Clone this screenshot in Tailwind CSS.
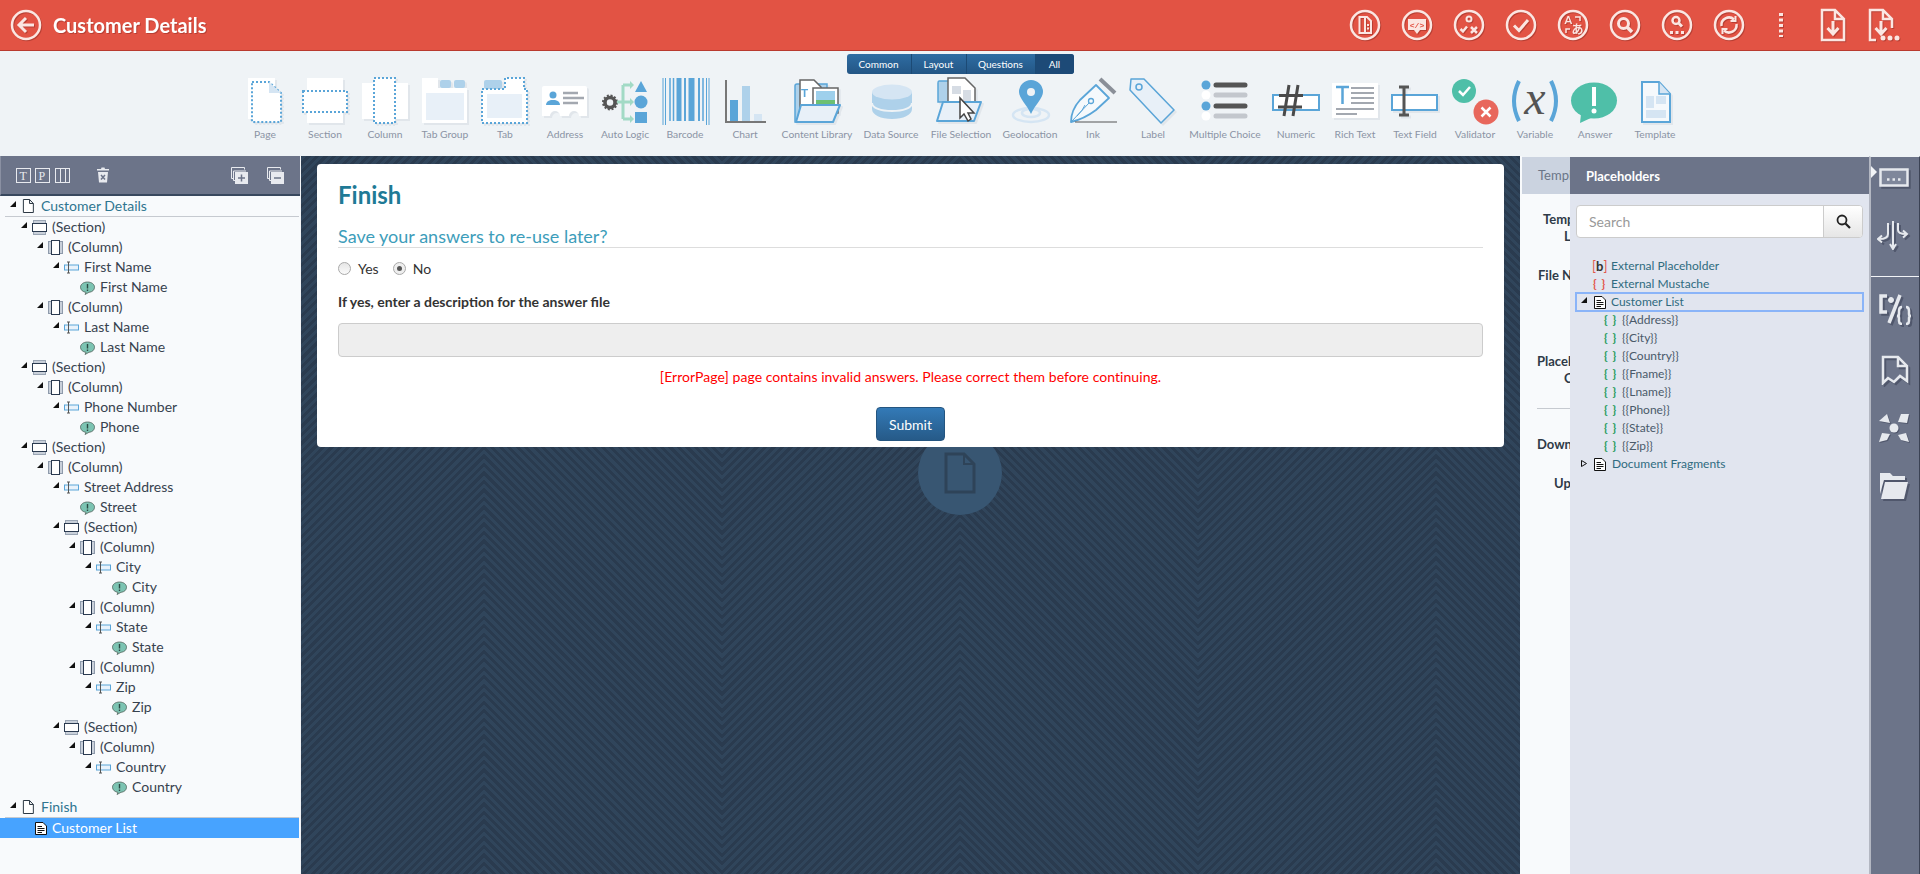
<!DOCTYPE html>
<html>
<head>
<meta charset="UTF-8">
<title>Customer Details</title>
<script src="https://cdn.jsdelivr.net/npm/@tailwindcss/browser@4"></script>
</head>
<body class="[font-family:Lato,'Noto_Sans',sans-serif] h-screen overflow-hidden flex flex-col bg-[#eff3f6]">

<!-- shared tree icons -->
<svg class="hidden">
  <symbol id="arrow" viewBox="0 0 6 6"><polygon points="0,6 6,6 6,0" fill="#111"/></symbol>
  <symbol id="page" viewBox="0 0 15 14"><path d="M2.500 .5H9L13 4.500V13.500H2.500Z M9 .5V4.500H13" fill="#fff" stroke="#26323f" transform="scale(.95 1)"/></symbol>
  <symbol id="section" viewBox="0 0 15 15"><rect x="1.500" y="0.500" width="12" height="14" fill="#c9d0da" stroke="#9aa5b4"/><rect x=".5" y="3.500" width="14" height="8" fill="#fff" stroke="#2a3a50"/></symbol>
  <symbol id="column" viewBox="0 0 15 15"><rect x=".5" y="1.500" width="14" height="12" fill="#c9d0da" stroke="#8e9aab"/><rect x="3.500" y=".5" width="8" height="14" fill="#fff" stroke="#2a3a50"/></symbol>
  <symbol id="field" viewBox="0 0 15 15"><rect x=".5" y="5" width="14" height="5" fill="#e8f2fb" stroke="#5aa5d8"/><path d="M4.500 2V13M3 2H6M3 13H6" stroke="#555" fill="none"/></symbol>
  <symbol id="answer" viewBox="0 0 15 15"><path d="M7.500 2C3.500 2 .5 4.200 .5 7.200C.5 10 3 12 6 12.300L5 14.500L9 12.300C12.300 12 14.500 10 14.500 7.200C14.500 4.200 11.500 2 7.500 2Z" fill="#7cc3b2" stroke="#55675f" stroke-width=".8"/><path d="M7.500 4V8.500M7.500 9.500V11" stroke="#2c4a44" stroke-width="1.400"/></symbol>
  <symbol id="listdoc" viewBox="0 0 12 13"><path d="M.5 .5H8L11.500 4V12.500H.5Z" fill="#fff" stroke="#111"/><path d="M2.500 4.500H7M2.500 6.500H9.500M2.500 8.500H9.500M2.500 10.500H7" stroke="#111"/></symbol>
</svg>

<!-- top bar -->
<header class="h-[51px] shrink-0 bg-[#e25344] border-b border-[#b93a2f] flex items-center text-[#fbe6e2]">
  <svg class="ml-[10px] drop-shadow-[1px_1px_0_#b83f33]" width="32" height="32" viewBox="0 0 32 32" fill="none" stroke="currentColor"><circle cx="16" cy="16" r="14" stroke-width="2.500"/><path d="M24 16H10M16 9L9 16L16 23" stroke-width="3"/></svg>
  <h1 class="ml-[11px] text-[20px] font-bold text-white drop-shadow-[1px_1px_0_#b83f33]">Customer Details</h1>
  <div class="ml-auto pr-[9px] flex items-center drop-shadow-[1px_1px_0_#b83f33]">
    <div class="w-[52px] flex justify-center"><svg width="32" height="32" viewBox="0 0 32 32" fill="none" stroke="currentColor"><circle cx="16" cy="16" r="14" stroke-width="2.500"/><path d="M10.500 8H18L22 12V24H10.500ZM16 8V24" stroke-width="2"/><path d="M19 15V22" stroke-width="2" stroke-dasharray="2 1.500"/></svg></div>
    <div class="w-[52px] flex justify-center"><svg width="32" height="32" viewBox="0 0 32 32"><circle cx="16" cy="16" r="14" fill="none" stroke="currentColor" stroke-width="2.500"/><path d="M7 10H25V21H19L16 25L13 21H7Z" fill="currentColor"/><text x="16" y="18.500" text-anchor="middle" font-size="8" font-weight="700" fill="#e25344" font-family="Liberation Mono">&lt;/&gt;</text></svg></div>
    <div class="w-[52px] flex justify-center"><svg width="32" height="32" viewBox="0 0 32 32" fill="none" stroke="currentColor"><circle cx="16" cy="16" r="14" stroke-width="2.500"/><circle cx="16" cy="10" r="2.500" stroke-width="2"/><path d="M7.500 20L10 22.500L14 17.500" stroke-width="2.500"/><path d="M18 18L24 24M24 18L18 24" stroke-width="2.500"/></svg></div>
    <div class="w-[52px] flex justify-center"><svg width="32" height="32" viewBox="0 0 32 32" fill="none" stroke="currentColor"><circle cx="16" cy="16" r="14" stroke-width="2.500"/><path d="M9 16.500L14 21.500L23 11" stroke-width="3"/></svg></div>
    <div class="w-[52px] flex justify-center"><svg width="32" height="32" viewBox="0 0 32 32" fill="none" stroke="currentColor"><circle cx="16" cy="16" r="14" stroke-width="2.500"/><text x="7.500" y="15" font-size="11" font-weight="700" fill="currentColor" stroke="none">A</text><text x="14.500" y="25" font-size="12" font-weight="700" fill="currentColor" stroke="none" font-family="Noto Sans CJK JP">あ</text><path d="M18 8H23V12M13 20H9V24" stroke-width="1.500"/></svg></div>
    <div class="w-[52px] flex justify-center"><svg width="32" height="32" viewBox="0 0 32 32" fill="none" stroke="currentColor"><circle cx="16" cy="16" r="14" stroke-width="2.500"/><circle cx="14.500" cy="14.500" r="5" stroke-width="3"/><path d="M18.500 18.500L23 23" stroke-width="3.500"/></svg></div>
    <div class="w-[52px] flex justify-center"><svg width="32" height="32" viewBox="0 0 32 32" fill="none" stroke="currentColor"><circle cx="16" cy="16" r="14" stroke-width="2.500"/><circle cx="15" cy="11.500" r="3.500" stroke-width="2.500"/><path d="M18 14.500L21 17.500" stroke-width="3"/><path d="M9 23.500H23" stroke-width="3" stroke-dasharray="3 2.500"/></svg></div>
    <div class="w-[52px] flex justify-center"><svg width="32" height="32" viewBox="0 0 32 32" fill="none" stroke="currentColor"><circle cx="16" cy="16" r="14" stroke-width="2.500"/><path d="M8.500 17A7.500 7.500 0 0 1 21 10.500M23.500 15A7.500 7.500 0 0 1 11 21.500" stroke-width="2.500"/><path d="M22.500 7V12H17.500M9.500 25V20H14.500" stroke-width="2"/></svg></div>
    <div class="w-[52px] flex justify-center"><svg width="6" height="32" viewBox="0 0 6 32"><path d="M3 4V28" stroke="currentColor" stroke-width="4" stroke-dasharray="3 2.500"/></svg></div>
    <div class="w-[52px] flex justify-center"><svg width="26" height="34" viewBox="0 0 26 34"><path d="M2 2H15L24 11V32H2Z M15 2V11H24" fill="none" stroke="currentColor" stroke-width="2.500"/><path d="M13 13V24M7.500 20L13 26L18.500 20" fill="none" stroke="currentColor" stroke-width="3"/></svg></div>
    <div class="w-[52px] flex justify-center"><svg width="34" height="34" viewBox="0 0 34 34"><path d="M8 32H2V2H15L24 11V20 M15 2V11H24" fill="none" stroke="currentColor" stroke-width="2.500"/><path d="M13 13V24M7.500 20L13 26L18.500 20" fill="none" stroke="currentColor" stroke-width="3"/><circle cx="15" cy="30" r="2.500" fill="currentColor"/><circle cx="22" cy="30" r="2.500" fill="currentColor"/><circle cx="29" cy="30" r="2.500" fill="currentColor"/></svg></div>
  </div>
</header>

<!-- element palette -->
<section class="h-[105px] shrink-0 bg-[#eff3f6] flex flex-col items-center">
  <div class="mt-[3px] h-[20px] flex rounded-[3px] overflow-hidden text-[10px] leading-[20px] text-white bg-gradient-to-b from-[#2f6da3] to-[#235685] relative z-10">
    <div class="w-[65px] text-center border-r border-[#1c4a75]">Common</div>
    <div class="w-[55px] text-center border-r border-[#1c4a75]">Layout</div>
    <div class="w-[69px] text-center border-r border-[#1c4a75]">Questions</div>
    <div class="w-[38px] text-center bg-[#1d4a77]">All</div>
  </div>
  <div class="-mt-[2px] flex text-[10.300px] leading-[12px] text-[#8b93a5] whitespace-nowrap">
    <div class="w-[60px] flex flex-col items-center">
      <svg class="drop-shadow-[2px_2px_0_#e1e6eb]" width="60" height="56" viewBox="0 0 60 56"><rect x="13" y="6" width="27" height="41" fill="#fff"/><path d="M17 10H34L46 21V50H17Z" fill="#fff" stroke="#5aa5d8" stroke-width="2" stroke-dasharray="2 2"/><path d="M34 10L46 21H34Z" fill="#d5e5f3"/></svg>
      <span>Page</span>
    </div>
    <div class="w-[60px] flex flex-col items-center">
      <svg class="drop-shadow-[2px_2px_0_#e1e6eb]" width="60" height="56" viewBox="0 0 60 56"><rect x="12" y="6" width="36" height="45" fill="#fff"/><rect x="8" y="19" width="44" height="21" fill="#fff" stroke="#5aa5d8" stroke-width="2" stroke-dasharray="2 2"/></svg>
      <span>Section</span>
    </div>
    <div class="w-[60px] flex flex-col items-center">
      <svg class="drop-shadow-[2px_2px_0_#e1e6eb]" width="60" height="56" viewBox="0 0 60 56"><rect x="7" y="11" width="46" height="36" fill="#fff"/><rect x="19" y="6" width="21" height="45" fill="#fff" stroke="#5aa5d8" stroke-width="2" stroke-dasharray="2 2"/></svg>
      <span>Column</span>
    </div>
    <div class="w-[60px] flex flex-col items-center">
      <svg class="drop-shadow-[2px_2px_0_#e1e6eb]" width="60" height="56" viewBox="0 0 60 56"><path d="M7 6H23V16H52V51H7Z" fill="#fff"/><rect x="25" y="8" width="11" height="8" rx="2" fill="#aed1ea"/><rect x="39" y="8" width="11" height="8" rx="2" fill="#aed1ea"/><rect x="11" y="21" width="38" height="27" fill="#e8f0f8"/></svg>
      <span>Tab Group</span>
    </div>
    <div class="w-[60px] flex flex-col items-center">
      <svg class="drop-shadow-[2px_2px_0_#e1e6eb]" width="60" height="56" viewBox="0 0 60 56"><rect x="9" y="8" width="18" height="9" rx="2" fill="#aed1ea"/><path d="M7 17H30V6H49V17H52V51H7Z" fill="#fff" stroke="#5aa5d8" stroke-width="2" stroke-dasharray="2 2"/><rect x="12" y="22" width="35" height="24" fill="#e8f0f8"/></svg>
      <span>Tab</span>
    </div>
    <div class="w-[60px] flex flex-col items-center">
      <svg class="drop-shadow-[2px_2px_0_#e1e6eb]" width="60" height="56" viewBox="0 0 60 56"><path d="M9 14H50Q52 14 52 16V44H44A5 5 0 0 0 34 44H25A5 5 0 0 0 15 44H7V16Q7 14 9 14Z" fill="#fff"/><circle cx="18" cy="23" r="3.500" fill="#5aa5d8"/><path d="M11 33Q11 29 16 28H20Q25 29 25 33Z" fill="#5aa5d8"/><path d="M28 21H43M28 26H49M28 31H43" stroke="#a3a8b0" stroke-width="2.500"/></svg>
      <span>Address</span>
    </div>
    <div class="w-[60px] flex flex-col items-center">
      <svg width="60" height="56" viewBox="0 0 60 56"><circle cx="15" cy="30.500" r="5" fill="none" stroke="#555" stroke-width="3.500"/><circle cx="15" cy="30.500" r="7" fill="none" stroke="#555" stroke-width="2" stroke-dasharray="2 1.700"/><path d="M28 13V47M28 13H36M28 30H36M22 30H28M28 47H36" fill="none" stroke="#a2dac5" stroke-width="3"/><path d="M35 9L39 13L35 17ZM35 26L39 30L35 34ZM35 43L39 47L35 51Z" fill="#a2dac5"/><polygon points="46,9 52,20 40,20" fill="#5aa5d8"/><circle cx="46" cy="30" r="6.500" fill="#5aa5d8"/><rect x="40" y="40" width="12" height="11" fill="#5aa5d8"/></svg>
      <span>Auto Logic</span>
    </div>
    <div class="w-[60px] flex flex-col items-center">
      <svg width="60" height="56" viewBox="0 0 60 56"><g stroke="#5aa5d8"><path d="M8 6V53M10.500 6V53M54 6V53M51.500 6V53" stroke-width="1"/><path d="M15 6V49M18.500 6V49" stroke-width="1.500"/><path d="M24 6V49" stroke-width="5"/><path d="M30 6V49M44 6V49" stroke-width="2"/><path d="M36.500 6V49" stroke-width="6"/><path d="M48 6V49" stroke-width="1.500"/></g></svg>
      <span>Barcode</span>
    </div>
    <div class="w-[60px] flex flex-col items-center">
      <svg width="60" height="56" viewBox="0 0 60 56"><path d="M11 8V50H51" fill="none" stroke="#777" stroke-width="2"/><rect x="15" y="28" width="8" height="21" fill="#5aa5d8"/><rect x="27" y="14" width="8" height="35" fill="#aed1ea"/><rect x="39" y="42" width="8" height="7" fill="#d5e5f3"/></svg>
      <span>Chart</span>
    </div>
    <div class="w-[80px] ml-[2px] flex flex-col items-center">
      <svg class="drop-shadow-[2px_2px_0_#e1e6eb]" width="80" height="56" viewBox="0 0 80 56"><path d="M20 12Q18 12 18 14V50H50V12Z" fill="#aed1ea" stroke="#5aa5d8" stroke-width="1.500"/><path d="M23 8H37L44 15V36H23Z" fill="#fff" stroke="#666" stroke-width="1.500"/><text x="24" y="25" font-size="12" font-weight="700" fill="#5aa5d8">T</text><rect x="36" y="16" width="25" height="25" fill="#fff" stroke="#666" stroke-width="1.500"/><rect x="39" y="19" width="19" height="9" fill="#9ed0ec"/><rect x="39" y="28" width="19" height="9" fill="#6cc073"/><path d="M24 33H63L56 50H19Z" fill="#e8f0f8" stroke="#5aa5d8" stroke-width="2" stroke-linejoin="round"/></svg>
      <span>Content Library</span>
    </div>
    <div class="w-[68px] flex flex-col items-center">
      <svg width="68" height="56" viewBox="0 0 68 56"><path d="M15 37V20H55V37C55 43 46 47 35 47C24 47 15 43 15 37Z" fill="#aed1ea"/><path d="M15 31C15 36 24 39 35 39C46 39 55 36 55 31" fill="none" stroke="#eff3f6" stroke-width="2"/><ellipse cx="35" cy="20" rx="20" ry="7.500" fill="#d5e5f3"/></svg>
      <span>Data Source</span>
    </div>
    <div class="w-[72px] flex flex-col items-center">
      <svg class="drop-shadow-[2px_2px_0_#e1e6eb]" width="72" height="56" viewBox="0 0 72 56"><path d="M14 9H30V30H13V11Q13 9 14 9Z" fill="#aed1ea" stroke="#5aa5d8" stroke-width="1.500"/><path d="M23 6H40L50 16V33H23Z" fill="#fff" stroke="#666" stroke-width="1.500"/><path d="M27 14H36V22H27ZM38 18H46V30H38Z" fill="#d6dce4"/><path d="M18 30H56L49 49H12Z" fill="#e8f0f8" stroke="#5aa5d8" stroke-width="2" stroke-linejoin="round"/><path d="M35 26V46L39 42L43 49L46 47L43 41H49Z" fill="#fff" stroke="#444" stroke-width="1.500"/></svg>
      <span>File Selection</span>
    </div>
    <div class="w-[66px] flex flex-col items-center">
      <svg width="66" height="56" viewBox="0 0 66 56"><ellipse cx="34" cy="43" rx="18" ry="7" fill="none" stroke="#d5e5f3" stroke-width="2.500"/><ellipse cx="34" cy="41" rx="9" ry="4" fill="none" stroke="#d5e5f3" stroke-width="2.500"/><path d="M34 42C30 33 22 26 22 20A12 12 0 0 1 46 20C46 26 38 33 34 42Z" fill="#5aa5d8"/><circle cx="34" cy="20" r="4" fill="#eff3f6"/></svg>
      <span>Geolocation</span>
    </div>
    <div class="w-[60px] flex flex-col items-center">
      <svg width="60" height="56" viewBox="0 0 60 56"><path d="M8 50Q8 38 17 28L33 13L46 26L33 38Q21 47 8 50Z" fill="#f5f9fc" stroke="#5aa5d8" stroke-width="1.800" stroke-linejoin="round"/><path d="M22 33Q20 38 14 44" fill="none" stroke="#5aa5d8"/><path d="M9 49L26 31" stroke="#5aa5d8"/><circle cx="28" cy="29" r="2.500" fill="none" stroke="#5aa5d8" stroke-width="1.300"/><path d="M37 7L52 21" stroke="#8a8f98" stroke-width="4"/><path d="M12 50H54" stroke="#555" stroke-width="1.200"/></svg>
      <span>Ink</span>
    </div>
    <div class="w-[60px] flex flex-col items-center">
      <svg class="drop-shadow-[2px_2px_0_#e1e6eb]" width="60" height="56" viewBox="0 0 60 56"><path d="M8 7H21L51 38L38 51L7 18Z" fill="#e8f0f8" stroke="#5aa5d8" stroke-width="1.500" stroke-linejoin="round"/><circle cx="16" cy="15" r="3" fill="none" stroke="#5aa5d8" stroke-width="1.500"/></svg>
      <span>Label</span>
    </div>
    <div class="w-[84px] flex flex-col items-center">
      <svg width="84" height="56" viewBox="0 0 84 56"><circle cx="23" cy="13" r="4.500" fill="#5aa5d8"/><circle cx="23" cy="23" r="4.500" fill="#fff"/><circle cx="23" cy="34" r="4.500" fill="#5aa5d8"/><circle cx="23" cy="44" r="4.500" fill="#fff"/><path d="M33 13H62M33 34H62" stroke="#555" stroke-width="5" stroke-linecap="round"/><path d="M33 23H62M33 44H62" stroke="#c3c7cd" stroke-width="5" stroke-linecap="round"/></svg>
      <span>Multiple Choice</span>
    </div>
    <div class="w-[58px] flex flex-col items-center">
      <svg width="58" height="56" viewBox="0 0 58 56"><rect x="6" y="23" width="46" height="15" fill="#fff" stroke="#5aa5d8" stroke-width="2"/><path d="M22 13L17 44M31 13L26 44M12 23.500H36M11 35H35" fill="none" stroke="#4a4a4a" stroke-width="3"/></svg>
      <span>Numeric</span>
    </div>
    <div class="w-[60px] flex flex-col items-center">
      <svg class="drop-shadow-[2px_2px_0_#e1e6eb]" width="60" height="56" viewBox="0 0 60 56"><rect x="7" y="11" width="46" height="35" fill="#fff"/><path d="M11 15H24M17.500 15V32" stroke="#5aa5d8" stroke-width="2.500"/><path d="M26 16H49M26 21H49M26 26H49M26 31H49M11 37H49M11 42H32" stroke="#a3a8b0" stroke-width="2"/></svg>
      <span>Rich Text</span>
    </div>
    <div class="w-[60px] flex flex-col items-center">
      <svg class="drop-shadow-[2px_2px_0_#e1e6eb]" width="60" height="56" viewBox="0 0 60 56"><rect x="7" y="23" width="45" height="15" fill="#fff" stroke="#5aa5d8" stroke-width="2"/><path d="M19 15V43M14 15H24M14 43H24" fill="none" stroke="#555" stroke-width="3"/></svg>
      <span>Text Field</span>
    </div>
    <div class="w-[60px] flex flex-col items-center">
      <svg width="60" height="56" viewBox="0 0 60 56"><circle cx="19" cy="19" r="12" fill="#4fbfa8"/><path d="M14 19L18 23L25 15" fill="none" stroke="#fff" stroke-width="2.500"/><circle cx="41" cy="40" r="12.500" fill="#e8675c"/><path d="M36.500 35.500L45.500 44.500M45.500 35.500L36.500 44.500" stroke="#fff" stroke-width="2.500"/></svg>
      <span>Validator</span>
    </div>
    <div class="w-[60px] flex flex-col items-center">
      <svg width="60" height="56" viewBox="0 0 60 56"><path d="M14 9Q4 29 14 49M46 9Q56 29 46 49" fill="none" stroke="#5aa5d8" stroke-width="4"/><text x="30" y="42" text-anchor="middle" font-size="48" font-style="italic" fill="#555" font-family="Liberation Serif">x</text></svg>
      <span>Variable</span>
    </div>
    <div class="w-[60px] flex flex-col items-center">
      <svg width="60" height="56" viewBox="0 0 60 56"><ellipse cx="29" cy="28.500" rx="23" ry="18" fill="#4fbfa8"/><path d="M16 42L15 51L28 45Z" fill="#4fbfa8"/><path d="M29 15L29 34" stroke="#fff" stroke-width="4"/><circle cx="29" cy="39" r="2.500" fill="#fff"/></svg>
      <span>Answer</span>
    </div>
    <div class="w-[60px] flex flex-col items-center">
      <svg class="drop-shadow-[2px_2px_0_#e1e6eb]" width="60" height="56" viewBox="0 0 60 56"><path d="M17 10H34L45 22V50H17Z" fill="#f5f9fc" stroke="#5aa5d8" stroke-width="2"/><path d="M34 10V22H45" fill="#d5e5f3" stroke="#5aa5d8" stroke-width="1.500"/><rect x="21" y="24" width="8" height="12" fill="#d5e5f3"/><rect x="31" y="24" width="10" height="8" fill="#d5e5f3"/><rect x="21" y="38" width="20" height="8" fill="#d5e5f3"/></svg>
      <span>Template</span>
    </div>
  </div>
</section>

<main class="flex-1 flex min-h-0">
  <!-- outline tree -->
  <aside class="w-[300px] shrink-0 bg-[#f8fafc] border-r border-[#f1f3f6] box-content text-[14px] leading-[20px] text-[#37424f] flex flex-col">
    <div class="h-[40px] shrink-0 bg-[#6c7489] border-b-2 border-[#38485e] border-l border-l-[#8a90a2] flex items-center text-[#e8eaef] relative">
      <svg class="ml-[15px]" width="56" height="17" viewBox="0 0 56 17" fill="none" stroke="currentColor"><rect x=".5" y="1.500" width="14" height="14"/><text x="3.500" y="13" font-size="12" font-family="Liberation Serif" fill="currentColor" stroke="none">T</text><rect x="19.500" y="1.500" width="14" height="14"/><text x="22.500" y="13" font-size="12" font-family="Liberation Serif" fill="currentColor" stroke="none">P</text><rect x="39.500" y="1.500" width="14" height="14"/><path d="M44.500 1.500V15.500M49.500 1.500V15.500"/></svg>
      <svg class="ml-[24px]" width="14" height="16" viewBox="0 0 14 16" fill="currentColor"><path d="M1 2H5L5.500 .5H8.500L9 2H13V3.500H1ZM2 5H12L11 15.500H3Z"/><path d="M5 8L9 12.500M9 8L5 12.500" stroke="#6c7489" stroke-width="1.500"/></svg>
      <svg class="ml-auto" width="17" height="17" viewBox="0 0 17 17" fill="none" stroke="currentColor"><path d="M13.500 2.500V.5H.5V11.500H2.500"/><path d="M15 4H2.500V13.500H4.500"/><rect x="4.500" y="5.500" width="12" height="11" fill="currentColor"/><path d="M10.500 7.500V14.500M7 11H14" stroke="#6c7489" stroke-width="1.500"/></svg>
      <svg class="ml-[19px] mr-[16px]" width="17" height="17" viewBox="0 0 17 17" fill="none" stroke="currentColor"><path d="M13.500 2.500V.5H.5V11.500H2.500"/><path d="M15 4H2.500V13.500H4.500"/><rect x="4.500" y="5.500" width="12" height="11" fill="currentColor"/><path d="M7 11H14" stroke="#6c7489" stroke-width="1.500"/></svg>
    </div>
    <div class="ml-[5px] w-[294px] h-[21px] border-b border-[#c6cad0] flex items-center pl-[5px] text-[#2f7590]"><svg class="w-[6px] h-[6px] -mt-[5px]" width="6" height="6"><use href="#arrow"/></svg><svg class="ml-[5px]" width="15" height="14"><use href="#page"/></svg><span class="ml-[5px]">Customer Details</span></div>

    <div class="h-[20px] flex items-center pl-[21px]"><svg class="-mt-[5px]" width="6" height="6"><use href="#arrow"/></svg><svg class="ml-[5px]" width="15" height="15"><use href="#section"/></svg><span class="ml-[5px]">(Section)</span></div>
    <div class="h-[20px] flex items-center pl-[37px]"><svg class="-mt-[5px]" width="6" height="6"><use href="#arrow"/></svg><svg class="ml-[5px]" width="15" height="15"><use href="#column"/></svg><span class="ml-[5px]">(Column)</span></div>
    <div class="h-[20px] flex items-center pl-[53px]"><svg class="-mt-[5px]" width="6" height="6"><use href="#arrow"/></svg><svg class="ml-[5px]" width="15" height="15"><use href="#field"/></svg><span class="ml-[5px]">First Name</span></div>
    <div class="h-[20px] flex items-center pl-[80px]"><svg width="15" height="15"><use href="#answer"/></svg><span class="ml-[5px]">First Name</span></div>
    <div class="h-[20px] flex items-center pl-[37px]"><svg class="-mt-[5px]" width="6" height="6"><use href="#arrow"/></svg><svg class="ml-[5px]" width="15" height="15"><use href="#column"/></svg><span class="ml-[5px]">(Column)</span></div>
    <div class="h-[20px] flex items-center pl-[53px]"><svg class="-mt-[5px]" width="6" height="6"><use href="#arrow"/></svg><svg class="ml-[5px]" width="15" height="15"><use href="#field"/></svg><span class="ml-[5px]">Last Name</span></div>
    <div class="h-[20px] flex items-center pl-[80px]"><svg width="15" height="15"><use href="#answer"/></svg><span class="ml-[5px]">Last Name</span></div>

    <div class="h-[20px] flex items-center pl-[21px]"><svg class="-mt-[5px]" width="6" height="6"><use href="#arrow"/></svg><svg class="ml-[5px]" width="15" height="15"><use href="#section"/></svg><span class="ml-[5px]">(Section)</span></div>
    <div class="h-[20px] flex items-center pl-[37px]"><svg class="-mt-[5px]" width="6" height="6"><use href="#arrow"/></svg><svg class="ml-[5px]" width="15" height="15"><use href="#column"/></svg><span class="ml-[5px]">(Column)</span></div>
    <div class="h-[20px] flex items-center pl-[53px]"><svg class="-mt-[5px]" width="6" height="6"><use href="#arrow"/></svg><svg class="ml-[5px]" width="15" height="15"><use href="#field"/></svg><span class="ml-[5px]">Phone Number</span></div>
    <div class="h-[20px] flex items-center pl-[80px]"><svg width="15" height="15"><use href="#answer"/></svg><span class="ml-[5px]">Phone</span></div>

    <div class="h-[20px] flex items-center pl-[21px]"><svg class="-mt-[5px]" width="6" height="6"><use href="#arrow"/></svg><svg class="ml-[5px]" width="15" height="15"><use href="#section"/></svg><span class="ml-[5px]">(Section)</span></div>
    <div class="h-[20px] flex items-center pl-[37px]"><svg class="-mt-[5px]" width="6" height="6"><use href="#arrow"/></svg><svg class="ml-[5px]" width="15" height="15"><use href="#column"/></svg><span class="ml-[5px]">(Column)</span></div>
    <div class="h-[20px] flex items-center pl-[53px]"><svg class="-mt-[5px]" width="6" height="6"><use href="#arrow"/></svg><svg class="ml-[5px]" width="15" height="15"><use href="#field"/></svg><span class="ml-[5px]">Street Address</span></div>
    <div class="h-[20px] flex items-center pl-[80px]"><svg width="15" height="15"><use href="#answer"/></svg><span class="ml-[5px]">Street</span></div>

    <div class="h-[20px] flex items-center pl-[53px]"><svg class="-mt-[5px]" width="6" height="6"><use href="#arrow"/></svg><svg class="ml-[5px]" width="15" height="15"><use href="#section"/></svg><span class="ml-[5px]">(Section)</span></div>
    <div class="h-[20px] flex items-center pl-[69px]"><svg class="-mt-[5px]" width="6" height="6"><use href="#arrow"/></svg><svg class="ml-[5px]" width="15" height="15"><use href="#column"/></svg><span class="ml-[5px]">(Column)</span></div>
    <div class="h-[20px] flex items-center pl-[85px]"><svg class="-mt-[5px]" width="6" height="6"><use href="#arrow"/></svg><svg class="ml-[5px]" width="15" height="15"><use href="#field"/></svg><span class="ml-[5px]">City</span></div>
    <div class="h-[20px] flex items-center pl-[112px]"><svg width="15" height="15"><use href="#answer"/></svg><span class="ml-[5px]">City</span></div>
    <div class="h-[20px] flex items-center pl-[69px]"><svg class="-mt-[5px]" width="6" height="6"><use href="#arrow"/></svg><svg class="ml-[5px]" width="15" height="15"><use href="#column"/></svg><span class="ml-[5px]">(Column)</span></div>
    <div class="h-[20px] flex items-center pl-[85px]"><svg class="-mt-[5px]" width="6" height="6"><use href="#arrow"/></svg><svg class="ml-[5px]" width="15" height="15"><use href="#field"/></svg><span class="ml-[5px]">State</span></div>
    <div class="h-[20px] flex items-center pl-[112px]"><svg width="15" height="15"><use href="#answer"/></svg><span class="ml-[5px]">State</span></div>
    <div class="h-[20px] flex items-center pl-[69px]"><svg class="-mt-[5px]" width="6" height="6"><use href="#arrow"/></svg><svg class="ml-[5px]" width="15" height="15"><use href="#column"/></svg><span class="ml-[5px]">(Column)</span></div>
    <div class="h-[20px] flex items-center pl-[85px]"><svg class="-mt-[5px]" width="6" height="6"><use href="#arrow"/></svg><svg class="ml-[5px]" width="15" height="15"><use href="#field"/></svg><span class="ml-[5px]">Zip</span></div>
    <div class="h-[20px] flex items-center pl-[112px]"><svg width="15" height="15"><use href="#answer"/></svg><span class="ml-[5px]">Zip</span></div>

    <div class="h-[20px] flex items-center pl-[53px]"><svg class="-mt-[5px]" width="6" height="6"><use href="#arrow"/></svg><svg class="ml-[5px]" width="15" height="15"><use href="#section"/></svg><span class="ml-[5px]">(Section)</span></div>
    <div class="h-[20px] flex items-center pl-[69px]"><svg class="-mt-[5px]" width="6" height="6"><use href="#arrow"/></svg><svg class="ml-[5px]" width="15" height="15"><use href="#column"/></svg><span class="ml-[5px]">(Column)</span></div>
    <div class="h-[20px] flex items-center pl-[85px]"><svg class="-mt-[5px]" width="6" height="6"><use href="#arrow"/></svg><svg class="ml-[5px]" width="15" height="15"><use href="#field"/></svg><span class="ml-[5px]">Country</span></div>
    <div class="h-[20px] flex items-center pl-[112px]"><svg width="15" height="15"><use href="#answer"/></svg><span class="ml-[5px]">Country</span></div>

    <div class="ml-[5px] w-[294px] h-[21px] border-b border-[#c6cad0] flex items-center pl-[5px] text-[#2f7590]"><svg class="-mt-[5px]" width="6" height="6"><use href="#arrow"/></svg><svg class="ml-[5px]" width="15" height="14"><use href="#page"/></svg><span class="ml-[5px]">Finish</span></div>
    <div class="h-[20px] w-[299px] bg-[#47a3ff] flex items-center pl-[35px] text-white"><svg width="12" height="13"><use href="#listdoc"/></svg><span class="ml-[5px]">Customer List</span></div>
  </aside>

  <!-- canvas -->
  <div class="w-[1219px] shrink-0 relative overflow-hidden bg-[#2d3f54]">
    <div class="absolute inset-0 flex -ml-[55px]">
      <div class="w-[238px] shrink-0 h-full bg-[repeating-linear-gradient(-45deg,#2a3b4f_0,#2a3b4f_3px,#30455b_3px,#30455b_6px)]"></div>
      <div class="w-[238px] shrink-0 h-full bg-[repeating-linear-gradient(45deg,#2a3b4f_0,#2a3b4f_3px,#30455b_3px,#30455b_6px)]"></div>
      <div class="w-[238px] shrink-0 h-full bg-[repeating-linear-gradient(-45deg,#2a3b4f_0,#2a3b4f_3px,#30455b_3px,#30455b_6px)]"></div>
      <div class="w-[238px] shrink-0 h-full bg-[repeating-linear-gradient(45deg,#2a3b4f_0,#2a3b4f_3px,#30455b_3px,#30455b_6px)]"></div>
      <div class="w-[238px] shrink-0 h-full bg-[repeating-linear-gradient(-45deg,#2a3b4f_0,#2a3b4f_3px,#30455b_3px,#30455b_6px)]"></div>
      <div class="w-[238px] shrink-0 h-full bg-[repeating-linear-gradient(45deg,#2a3b4f_0,#2a3b4f_3px,#30455b_3px,#30455b_6px)]"></div>
    </div>
    <div class="absolute left-[617px] top-[275px] w-[84px] h-[84px] rounded-full bg-[#385672] flex items-center justify-center">
      <svg width="32" height="42" viewBox="0 0 32 42" fill="none" stroke="#2e4358" stroke-width="3"><path d="M2 2H20L30 12V40H2Z"/><path d="M20 2V12H30" stroke-width="2"/></svg>
    </div>

    <form class="relative mx-4 mt-2 bg-white rounded-[4px] px-[21px] pt-[17px] pb-[6px] text-[14px] text-[#333]">
      <h2 class="text-[24px] leading-[28px] font-bold text-[#1f7a96]">Finish</h2>
      <h3 class="mt-4 h-[23px] text-[18px] leading-[22px] text-[#3d9dba] border-b border-[#ddd]">Save your answers to re-use later?</h3>
      <div class="mt-[10px] h-5 flex items-center">
        <span class="w-[13px] h-[13px] rounded-full border border-[#a9a9a9] bg-gradient-to-b from-[#e6e6e6] to-[#fafafa]"></span>
        <span class="ml-[7px]">Yes</span>
        <span class="ml-[14px] w-[13px] h-[13px] rounded-full border border-[#a9a9a9] bg-[#eee] flex items-center justify-center"><span class="w-[5px] h-[5px] rounded-full bg-[#555]"></span></span>
        <span class="ml-[7px]">No</span>
      </div>
      <label class="block mt-[14px] leading-[20px] font-bold">If yes, enter a description for the answer file</label>
      <div class="mt-[11px] h-[34px] bg-[#eee] border border-[#ccc] rounded-[4px]"></div>
      <p class="mt-[10px] leading-[20px] text-center text-[#ff0000] tracking-[.05px]">[ErrorPage] page contains invalid answers. Please correct them before continuing.</p>
      <div class="mt-5 flex justify-center">
        <button type="button" class="w-[69px] h-[34px] rounded-[4px] border border-[#245580] bg-gradient-to-b from-[#337ab7] to-[#265a88] text-white text-[14px]">Submit</button>
      </div>
    </form>
  </div>

  <!-- template properties, mostly covered by the placeholder panel -->
  <div class="w-[50px] shrink-0 bg-[#f8fafc] overflow-hidden text-[13px] leading-[17px] font-bold text-[#2f3a48] whitespace-nowrap pl-[2px]">
    <div class="h-[38px] bg-[#cbd3e0] border-t border-[#eff3f6] font-normal text-[#6a7587] leading-[37px] pl-[16px]">Template</div>
    <p class="mt-[17px] pl-[21px]">Template</p>
    <p class="pl-[42px]">Library</p>
    <p class="mt-[22px] pl-[16px]">File Name</p>
    <p class="mt-[69px] pl-[15px]">Placeholder</p>
    <p class="pl-[42px]">Collection</p>
    <div class="mt-[21px] ml-[15px] h-px bg-[#c6cad0]"></div>
    <p class="mt-[27px] pl-[15px]">Download</p>
    <p class="mt-[22px] pl-[32px]">Upload</p>
  </div>

  <!-- placeholders -->
  <div class="w-[299px] shrink-0 bg-[#e1e5ef] flex flex-col text-[12px] leading-[18px] text-[#2f6b80]">
    <div class="h-[38px] shrink-0 bg-[#6c7489] border-t border-[#eff3f6] flex items-center pl-[16px] text-[13px] font-bold text-white">Placeholders</div>
    <div class="mt-[11px] ml-[6px] w-[287px] h-[33px] flex rounded-[4px] border border-[#ccc] overflow-hidden bg-white">
      <span class="flex-1 pl-[12px] text-[14px] leading-[31px] text-[#999]">Search</span>
      <span class="w-[39px] border-l border-[#ccc] bg-gradient-to-b from-white to-[#e6e6e6] flex items-center justify-center">
        <svg width="15" height="15" viewBox="0 0 15 15" fill="none" stroke="#222"><circle cx="6" cy="6" r="4.500" stroke-width="1.800"/><path d="M9.500 9.500L14 14" stroke-width="2.200"/></svg>
      </span>
    </div>
    <div class="mt-[19px] h-[18px] flex items-center pl-[22px]"><span class="w-[19px] text-[13px] font-bold text-[#333]"><span class="text-[#e2574c] font-normal">[</span>b<span class="text-[#e2574c] font-normal">]</span></span>External Placeholder</div>
    <div class="h-[18px] flex items-center pl-[23px]"><span class="w-[18px] font-bold tracking-[1px] text-[#e2574c]">{ }</span>External Mustache</div>
    <div class="ml-[5px] w-[289px] h-[20px] -my-px border-2 border-[#8ab4f8] flex items-center pl-[4px] relative"><svg class="-mt-[4px]" width="6" height="6"><use href="#arrow"/></svg><svg class="ml-[7px]" width="12" height="13"><use href="#listdoc"/></svg><span class="ml-[5px]">Customer List</span></div>
    <div class="h-[18px] flex items-center pl-[34px] text-[#4a5a6a]"><span class="w-[18px] font-bold tracking-[1px] text-[#2a9d60]">{ }</span>{{Address}}</div>
    <div class="h-[18px] flex items-center pl-[34px] text-[#4a5a6a]"><span class="w-[18px] font-bold tracking-[1px] text-[#2a9d60]">{ }</span>{{City}}</div>
    <div class="h-[18px] flex items-center pl-[34px] text-[#4a5a6a]"><span class="w-[18px] font-bold tracking-[1px] text-[#2a9d60]">{ }</span>{{Country}}</div>
    <div class="h-[18px] flex items-center pl-[34px] text-[#4a5a6a]"><span class="w-[18px] font-bold tracking-[1px] text-[#2a9d60]">{ }</span>{{Fname}}</div>
    <div class="h-[18px] flex items-center pl-[34px] text-[#4a5a6a]"><span class="w-[18px] font-bold tracking-[1px] text-[#2a9d60]">{ }</span>{{Lname}}</div>
    <div class="h-[18px] flex items-center pl-[34px] text-[#4a5a6a]"><span class="w-[18px] font-bold tracking-[1px] text-[#2a9d60]">{ }</span>{{Phone}}</div>
    <div class="h-[18px] flex items-center pl-[34px] text-[#4a5a6a]"><span class="w-[18px] font-bold tracking-[1px] text-[#2a9d60]">{ }</span>{{State}}</div>
    <div class="h-[18px] flex items-center pl-[34px] text-[#4a5a6a]"><span class="w-[18px] font-bold tracking-[1px] text-[#2a9d60]">{ }</span>{{Zip}}</div>
    <div class="h-[18px] flex items-center pl-[11px]"><svg class="mt-[-2px]" width="6" height="7" viewBox="0 0 6 7"><polygon points=".5,.5 5.500,3.500 .5,6.500" fill="#e1e5ef" stroke="#111"/></svg><svg class="ml-[7px]" width="12" height="13"><use href="#listdoc"/></svg><span class="ml-[6px]">Document Fragments</span></div>
  </div>

  <!-- tool rail -->
  <div class="w-[51px] shrink-0 bg-[#6c7489] border-l-2 border-[#b3b7c2] border-r border-r-[#3b4254] border-t border-t-[#eff3f6] relative text-[#e6e9ee]">
    <svg class="absolute left-0 top-[9px]" width="6" height="12" viewBox="0 0 6 12"><polygon points="0,0 6,6 0,12" fill="#f2f4f7"/></svg>
    <div class="h-[41px] flex items-center pl-[8px]"><svg class="drop-shadow-[2px_2px_0_#50576c]" width="30" height="20" viewBox="0 0 30 20"><rect x="1.500" y="1.500" width="27" height="16" fill="#7f879b" stroke="currentColor" stroke-width="2.500"/><path d="M8 11.500H22" stroke="currentColor" stroke-width="2.500" stroke-dasharray="2.500 3"/></svg></div>
    <div class="mt-4 h-[42px] flex items-center pl-[6px]"><svg class="drop-shadow-[2px_2px_0_#50576c]" width="32" height="30" viewBox="0 0 32 30" fill="none" stroke="currentColor" stroke-width="2"><path d="M16 1V28M13 24L16 29L19 24" /><path d="M11 3V14C11 18 8 19 2 19M5 15.500L1 19L5 22.500"/><path d="M21 3V10C21 13 24 14 29 14M26 10.500L30 14L26 17.500"/></svg></div>
    <div class="mt-5 h-px bg-[#f2f4f7]"></div>
    <div class="mt-[11px] h-[42px] flex items-center pl-[8px]"><svg class="drop-shadow-[2px_2px_0_#50576c]" width="32" height="32" viewBox="0 0 32 32" fill="none" stroke="currentColor"><path d="M8 3H2V19H8" stroke-width="3.500"/><path d="M21 2L10 30" stroke-width="3.500"/><circle cx="12" cy="7" r="2.500" fill="currentColor"/><path d="M23 14Q20 14 20 18V21Q20 23 18 23Q20 23 20 25V28Q20 31 23 31M27 14Q30 14 30 18V21Q30 23 32 23Q30 23 30 25V28Q30 31 27 31" stroke-width="2.500"/></svg></div>
    <div class="mt-[19px] h-[42px] flex items-center pl-[10px]"><svg class="drop-shadow-[2px_2px_0_#50576c]" width="28" height="30" viewBox="0 0 28 30" fill="none" stroke="currentColor" stroke-width="2.500"><path d="M2 2H17L26 11V26L19 21L13 27L7 23L2 28Z"/><path d="M17 2V11H26"/></svg></div>
    <div class="mt-4 h-[42px] flex items-center pl-[7px]"><svg class="drop-shadow-[1px_1px_0_#50576c]" width="32" height="32" viewBox="0 0 32 32" fill="currentColor"><circle cx="16" cy="16" r="4.500"/><polygon points="9,2 12,11 1,9"/><polygon points="23,2 31,2 29,11 20,10"/><polygon points="1,30 4,21 12,22 9,28"/><polygon points="31,30 28,21 20,23 23,28"/></svg></div>
    <div class="mt-4 h-[42px] flex items-center pl-[8px]"><svg class="drop-shadow-[2px_2px_0_#50576c]" width="30" height="28" viewBox="0 0 30 28" fill="currentColor"><path d="M1 1H11L14 4H26V8H5L1 22Z"/><path d="M6 10H29L25 27H2Z"/></svg></div>
  </div>
</main>
</body>
</html>
